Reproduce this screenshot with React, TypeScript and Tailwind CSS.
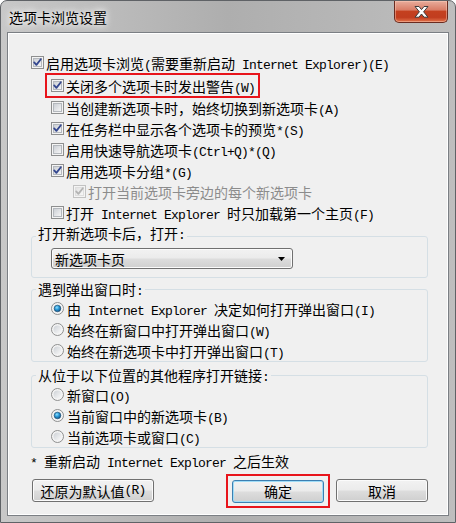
import React from "react";

// half-width runs (latin, digits, ascii punctuation) use a mono face like SimSun's latin
const LATIN = /([\u0000-\u00ff]+)/;

function T({ s }: { s: string }) {
  return (
    <>
      {s
        .split(LATIN)
        .filter(Boolean)
        .map((part, i) =>
          LATIN.test(part) ? (
            <span key={i} className="font-['Liberation_Mono',monospace] text-[13px] tracking-[-0.8px] leading-[0px] whitespace-pre">
              {part}
            </span>
          ) : (
            <span key={i}>{part}</span>
          )
        )}
    </>
  );
}

function CheckBox({ checked, disabled }: { checked?: boolean; disabled?: boolean }) {
  return (
    <svg width="13" height="13" viewBox="0 0 13 13" className="shrink-0">
      <defs>
        <linearGradient id="cbIn" x1="0" y1="0" x2="1" y2="1">
          <stop offset="0" stopColor="#c9cdd3" />
          <stop offset="1" stopColor="#f8f8f8" />
        </linearGradient>
        <linearGradient id="cbInDis" x1="0" y1="0" x2="1" y2="1">
          <stop offset="0" stopColor="#e2e2e2" />
          <stop offset="1" stopColor="#f8f8f8" />
        </linearGradient>
      </defs>
      <rect x="0.5" y="0.5" width="12" height="12" fill="#f4f4f4" stroke={disabled ? "#c2c2c2" : "#8e8f8f"} />
      <rect x="2.5" y="2.5" width="8" height="8" fill={disabled ? "url(#cbInDis)" : "url(#cbIn)"} stroke={disabled ? "#dedede" : "#b4b8bd"} />
      {checked && (
        <path
          d="M3.2 6.4 L5.4 8.9 L9.8 3.2"
          fill="none"
          stroke={disabled ? "#b4b4b4" : "#34478f"}
          strokeWidth="1.8"
          strokeLinecap="round"
          strokeLinejoin="round"
        />
      )}
    </svg>
  );
}

function Radio({ checked }: { checked?: boolean }) {
  return (
    <svg width="13" height="13" viewBox="0 0 13 13" className="shrink-0">
      <defs>
        <linearGradient id="rdIn" x1="0" y1="0" x2="1" y2="1">
          <stop offset="0" stopColor="#cdd1d6" />
          <stop offset="1" stopColor="#fafafa" />
        </linearGradient>
        <radialGradient id="rdDot" cx="0.4" cy="0.35" r="0.7">
          <stop offset="0" stopColor="#8fe0ff" />
          <stop offset="0.45" stopColor="#2c9ad8" />
          <stop offset="1" stopColor="#0f4a7c" />
        </radialGradient>
      </defs>
      <circle cx="6.5" cy="6.5" r="6" fill="#f4f4f4" stroke="#8e8f8f" />
      <circle cx="6.5" cy="6.5" r="4" fill="url(#rdIn)" />
      {checked && <circle cx="6.5" cy="6.5" r="3.3" fill="url(#rdDot)" stroke="#17496f" strokeWidth="0.6" />}
    </svg>
  );
}

function CheckRow({ label, checked, disabled }: { label: string; checked?: boolean; disabled?: boolean }) {
  return (
    <div className={`h-[21px] flex items-center gap-[2px] ${disabled ? "text-[#8c8c8c]" : "text-black"}`}>
      <CheckBox checked={checked} disabled={disabled} />
      <span className="leading-[16px] whitespace-nowrap">
        <T s={label} />
      </span>
    </div>
  );
}

function RadioRow({ label, checked }: { label: string; checked?: boolean }) {
  return (
    <div className="h-[21px] flex items-center gap-[3px]">
      <Radio checked={checked} />
      <span className="leading-[16px] whitespace-nowrap">
        <T s={label} />
      </span>
    </div>
  );
}

function Group({ label, className, children }: { label: string; className: string; children: React.ReactNode }) {
  // caption row sits over the frame's top line
  return (
    <div className={`flex flex-col ${className}`}>
      <div className="h-[16px] leading-[16px] flex">
        <span className="ml-[5px] px-[2px] bg-[#f0f0f0] whitespace-nowrap relative z-10">
          <T s={label} />
        </span>
      </div>
      {children}
    </div>
  );
}

const btn =
  "h-[23px] w-[92px] flex items-center justify-center rounded-[3px] border leading-[16px] bg-[linear-gradient(to_bottom,#f2f2f2_0%,#ebebeb_48%,#dddddd_52%,#cfcfcf_100%)]";

export default function App() {
  return (
    <div className="w-[456px] h-[523px] flex flex-col rounded-t-[7px] border border-[#5f6266] bg-linear-to-r from-[#c8c8c8] via-[#aeaeae] to-[#bebebe] overflow-hidden font-['Noto_Sans_CJK_SC',sans-serif] text-[14px] text-black">
      {/* title bar */}
      <div className="h-[31px] shrink-0 flex items-start">
        <div className="pl-[8px] pt-[7px] leading-[18px] [text-shadow:0_0_6px_#ffffff,0_0_10px_#ffffff]">
          选项卡浏览设置
        </div>
        <div className="ml-auto mr-[7px] w-[54px] h-[22px] flex items-center justify-center rounded-b-[5px] border border-t-0 border-[#6a2b20] bg-[linear-gradient(to_bottom,#e8ad9c_0%,#d97d67_42%,#c4401f_50%,#c13d1f_78%,#e2744c_100%)] shadow-[inset_0_0_0_1px_rgba(255,210,190,0.45)]">
          <svg width="15" height="12" viewBox="0 0 15 12">
            <polygon
              points="1,0.5 5,0.5 7.5,3.6 10,0.5 14,0.5 9.6,5.8 14,11.2 10,11.2 7.5,8 5,11.2 1,11.2 5.4,5.8"
              fill="#ffffff"
              stroke="#3c3c3c"
              strokeWidth="1"
              strokeLinejoin="round"
            />
          </svg>
        </div>
      </div>

      {/* client area */}
      <div className="mx-[6px] mb-[6px] h-[484px] shrink-0 border border-[#7b7f84] bg-[#f0f0f0] shadow-[inset_0_0_0_1px_#ffffff] flex flex-col pl-[23px] pr-[20px] pt-[19px]">
        <CheckRow label="启用选项卡浏览(需要重新启动 Internet Explorer)(E)" checked />

        <div className="ml-[14px] -mb-[1px] self-start border-2 border-[#e8141b] pl-[4px] pr-[3px]">
          <CheckRow label="关闭多个选项卡时发出警告(W)" checked />
        </div>

        <div className="ml-[20px] flex flex-col">
          <CheckRow label="当创建新选项卡时，始终切换到新选项卡(A)" />
          <CheckRow label="在任务栏中显示各个选项卡的预览*(S)" checked />
          <CheckRow label="启用快速导航选项卡(Ctrl+Q)*(Q)" />
          <CheckRow label="启用选项卡分组*(G)" checked />
          <div className="ml-[22px]">
            <CheckRow label="打开当前选项卡旁边的每个新选项卡" checked disabled />
          </div>
          <CheckRow label="打开 Internet Explorer 时只加载第一个主页(F)" />
        </div>

        {/* group: new tab */}
        <Group label="打开新选项卡后，打开:" className="mt-[2px]">
          <div className="-mt-[5px] border border-[#d5dfe5] rounded-[3px] pl-[19px] pt-[11px] pb-[8px]">
            <div className="w-[242px] h-[21px] flex items-center justify-between pl-[3px] pr-[7px] rounded-[3px] border border-[#707070] leading-[16px] bg-[linear-gradient(to_bottom,#f2f2f2_0%,#ebebeb_48%,#dddddd_52%,#cfcfcf_100%)] shadow-[inset_0_0_0_1px_#fbfbfb]">
              <span>新选项卡页</span>
              <svg width="7" height="4" viewBox="0 0 7 4">
                <polygon points="0,0 7,0 3.5,4" fill="#000000" />
              </svg>
            </div>
          </div>
        </Group>

        {/* group: popups */}
        <Group label="遇到弹出窗口时:" className="mt-[3px]">
          <div className="-mt-[8px] border border-[#d5dfe5] rounded-[3px] pl-[19px] pt-[8px] flex flex-col">
            <RadioRow label="由 Internet Explorer 决定如何打开弹出窗口(I)" checked />
            <RadioRow label="始终在新窗口中打开弹出窗口(W)" />
            <RadioRow label="始终在新选项卡中打开弹出窗口(T)" />
          </div>
        </Group>

        {/* group: links from other programs */}
        <Group label="从位于以下位置的其他程序打开链接:" className="mt-[5px]">
          <div className="-mt-[8px] border border-[#d5dfe5] rounded-[3px] pl-[19px] pt-[8px] flex flex-col">
            <RadioRow label="新窗口(O)" />
            <RadioRow label="当前窗口中的新选项卡(B)" checked />
            <RadioRow label="当前选项卡或窗口(C)" />
          </div>
        </Group>

        <div className="mt-[5px] -ml-[1px] h-[16px] leading-[16px] whitespace-nowrap">
          <T s="* 重新启动 Internet Explorer 之后生效" />
        </div>

        <div className="mt-[10px] h-[23px] flex items-center">
          <button className={`${btn} ml-[1px] w-[122px] border-[#707070] shadow-[inset_0_0_0_1px_#fbfbfb]`}>
            <T s="还原为默认值(R)" />
          </button>
          <div className="ml-[72px] border-2 border-[#e8141b] px-[4px] pt-[4px] pb-[3px]">
            <button className={`${btn} border-[#3c7fb1] shadow-[inset_0_0_0_1px_#9fdcf7]`}>确定</button>
          </div>
          <button className={`${btn} ml-[6px] border-[#707070] shadow-[inset_0_0_0_1px_#fbfbfb]`}>取消</button>
        </div>
      </div>
    </div>
  );
}
